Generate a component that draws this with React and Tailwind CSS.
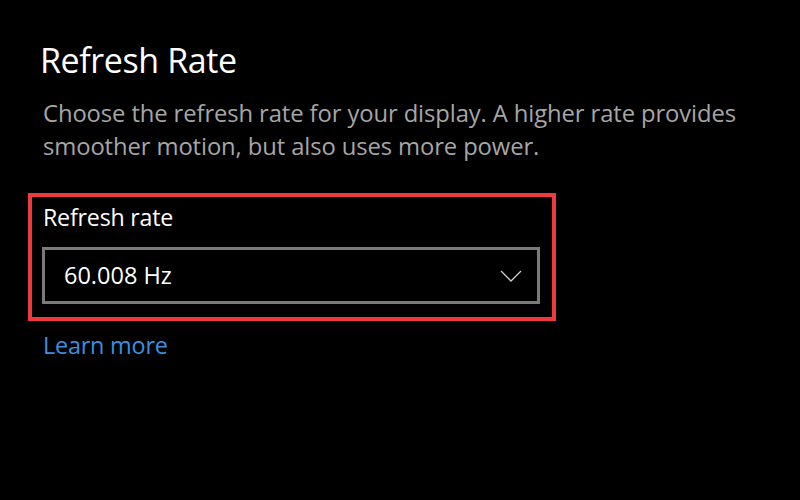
export default function App() {
  return (
    <div className="w-[800px] h-[500px] bg-black overflow-hidden" style={{ fontFamily: '"Open Sans", "Noto Sans", sans-serif' }}>
      <div className="pl-[40px] pt-[37px]">
        <h1 className="text-[34px] leading-[46px] text-white font-normal tracking-[-0.4px]">Refresh Rate</h1>
        <p className="mt-[14px] ml-[3px] w-[720px] text-[23.8px] leading-[33px] text-[#a6a6a6] tracking-[-0.1px]">
          Choose the refresh rate for your display. A higher rate provides smoother motion, but also uses more power.
        </p>
        <div className="mt-[30px] ml-[-12px] w-[528px] border-[4px] border-[#ee3a3c] pl-[11px] pr-[12px] pt-[5px] pb-[13px]">
          <div className="text-[23.2px] leading-[30px] text-white tracking-[-0.2px]">Refresh rate</div>
          <div className="mt-[15px] ml-[-1px] h-[57px] border-[3px] border-[#7a7a7a] flex items-center justify-between pl-[19px] pr-[14px]">
            <span className="text-[23.5px] text-white">60.008 Hz</span>
            <svg width="24" height="14" viewBox="0 0 24 14" fill="none" stroke="#cfcfcf" strokeWidth="1.3">
              <path d="M2 2 L12 12 L22 2" />
            </svg>
          </div>
        </div>
        <div className="mt-[7px] ml-[3px] text-[23.4px] leading-[34px] text-[#3b8fe0] tracking-[-0.2px]">Learn more</div>
      </div>
    </div>
  );
}
